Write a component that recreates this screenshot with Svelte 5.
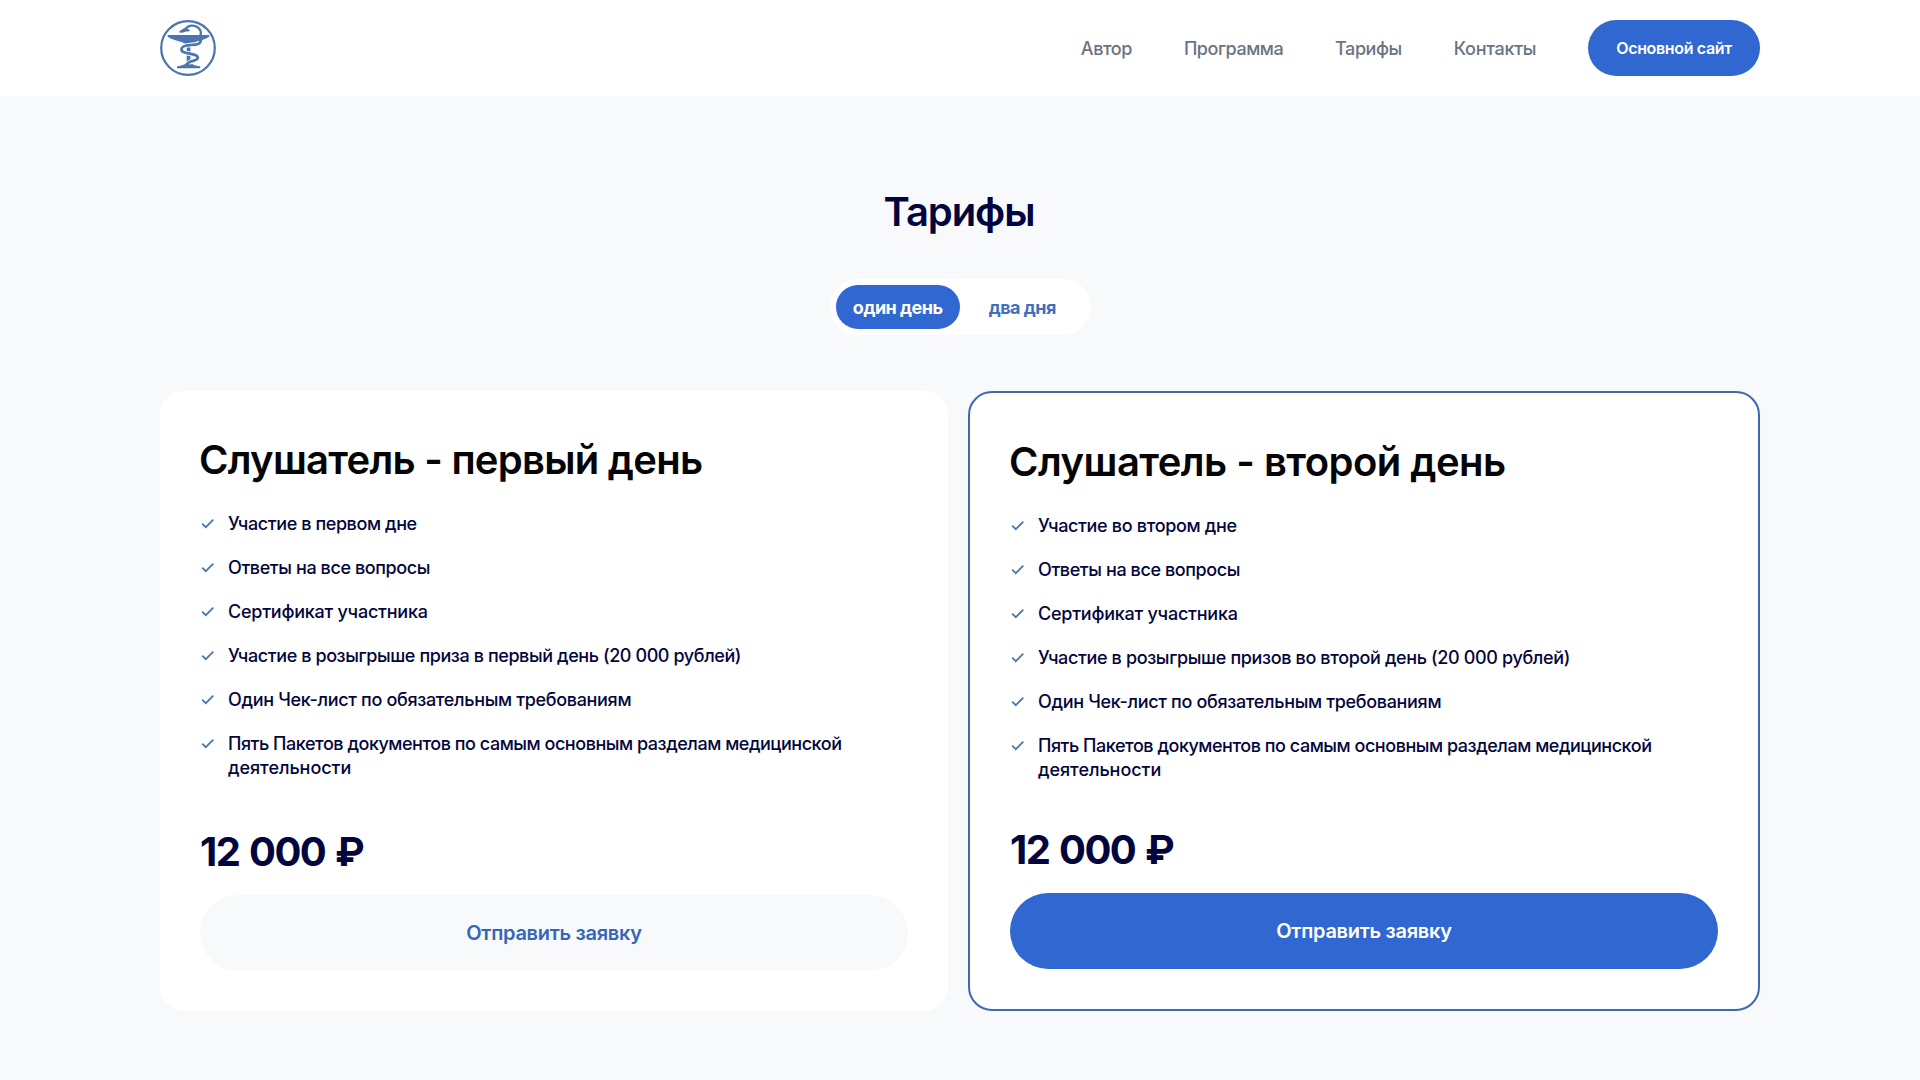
<script>
  const nav = [
    { label: 'Автор', cls: 'author' },
    { label: 'Программа', cls: 'program' },
    { label: 'Тарифы', cls: 'prices' },
    { label: 'Контакты', cls: 'contacts' }
  ];

  const plans = [
    {
      title: 'Слушатель - первый день',
      kind: 'first',
      price: '12 000 ₽',
      features: [
        'Участие в первом дне',
        'Ответы на все вопросы',
        'Сертификат участника',
        'Участие в розыгрыше приза в первый день (20 000 рублей)',
        'Один Чек-лист по обязательным требованиям'
      ]
    },
    {
      title: 'Слушатель - второй день',
      kind: 'second',
      price: '12 000 ₽',
      features: [
        'Участие во втором дне',
        'Ответы на все вопросы',
        'Сертификат участника',
        'Участие в розыгрыше призов во второй день (20 000 рублей)',
        'Один Чек-лист по обязательным требованиям'
      ]
    }
  ];

  let days = $state(1);
</script>

{#snippet check()}
  <svg class="check" viewBox="0 0 16 24" aria-hidden="true">
    <path d="M2.2 11.6 5.8 15.2 13.3 7.6" />
  </svg>
{/snippet}

<header>
  <div class="container bar">
    <a class="logo" href="#top" aria-label="Главная">
      <svg viewBox="0 0 56 56">
        <circle cx="28" cy="28" r="26.8" fill="none" stroke="#4b74b0" stroke-width="2.2" />
        <g fill="#4b74b0">
          <path d="M7.6 14.9h41.800v1.700c-3 2.700-8.500 3.800-12.900 5.200-3 .9-5.200 1.700-6 3.200h-3.900c-.8-1.500-3-2.300-6-3.200C16.200 20.400 10.600 19.300 7.600 16.600z" />
          <path d="M26.7 23h3.700v18.500c.1 2.500 3.200 3.700 9.8 4.800v2H17v-2c6.600-1.100 9.600-2.300 9.700-4.800z" />
          <path d="M18.8 12.300c1.700-2.500 4.800-4.500 7.500-4.100 1.900.3 2.800 1.500 4.100 2.400-1.900 1.300-3.900.6-5.700 1.300-1.400.6-3.400 1.200-5.900.4z" />
        </g>
        <g fill="none" stroke="#4b74b0" stroke-linecap="round">
          <path d="M25.5 8.8C28 5.300 33.500 4.600 37.200 7c3.600 2.500 4.400 5.400 3.200 8.400" stroke-width="2.3" />
          <path d="M40.200 22c-2 2.800-5.600 2.700-9.400 3-5.100.3-9.400 1.400-9.400 4.500 0 5.400 16.400 3 16.400 8.300 0 3.400-7.800 2.500-9.600 5.800" stroke="#fff" stroke-width="4.600" stroke-linecap="butt" />
          <path d="M40.800 19.300c.4 5.200-5.200 5.400-10 5.700-5.100.3-9.400 1.400-9.400 4.500 0 5.400 16.400 3 16.400 8.300 0 3.400-7.800 2.500-9.600 5.300" stroke-width="2.700" />
        </g>
      </svg>
    </a>
    <nav>
      {#each nav as item}
        <a class={item.cls} href="#{item.cls}">{item.label}</a>
      {/each}
      <a class="site" href="#site">Основной сайт</a>
    </nav>
  </div>
</header>

<main class="container">
  <h1>Тарифы</h1>

  <div class="tabs">
    <button class:active={days === 1} onclick={() => (days = 1)}>один день</button>
    <button class:active={days === 2} onclick={() => (days = 2)}>два дня</button>
  </div>

  <section class="plans">
    {#each plans as plan}
      <article class={plan.kind}>
        <h2>{plan.title}</h2>
        <ul>
          {#each plan.features as feature}
            <li>{@render check()}<span>{feature}</span></li>
          {/each}
          <li>
            {@render check()}
            <span>Пять Пакетов документов по самым основным разделам медицинской <span class="tail">деятельности</span></span>
          </li>
        </ul>
        <p class="price">{plan.price}</p>
        <button class="apply">Отправить заявку</button>
      </article>
    {/each}
  </section>
</main>

<style>
  :global(body) {
    margin: 0;
    background: #f8f9fb;
    font-family: Inter, 'Liberation Sans', sans-serif;
    color: #03063d;
  }

  a {
    color: inherit;
    text-decoration: none;
  }

  button {
    border: 0;
    padding: 0;
    font-family: inherit;
    cursor: pointer;
  }

  .container {
    width: 1600px;
    margin: 0 auto;
  }

  header {
    background: #fff;
  }

  .bar {
    display: flex;
    align-items: center;
    justify-content: space-between;
    height: 96px;
  }

  .logo,
  .logo svg {
    display: block;
    width: 56px;
    height: 56px;
  }

  nav {
    display: flex;
    align-items: center;
    gap: 51.9px;
    font-size: 18px;
    font-weight: 500;
    color: #6a7382;
  }

  .author { letter-spacing: -0.42px; }
  .program { letter-spacing: -0.48px; }
  .prices { letter-spacing: -0.42px; }
  .contacts { letter-spacing: -0.29px; }

  .site {
    display: flex;
    align-items: center;
    justify-content: center;
    width: 172px;
    height: 56px;
    border-radius: 28px;
    background: #3067d0;
    color: #fff;
    font-size: 16px;
    font-weight: 600;
    letter-spacing: -0.346px;
  }

  main {
    display: flex;
    flex-direction: column;
    align-items: center;
    padding: 92px 0 69px;
  }

  h1 {
    margin: 0 0 43px;
    padding-right: 2px;
    font-size: 40px;
    line-height: 48px;
    font-weight: 600;
    letter-spacing: -1.1px;
    color: #02043d;
  }

  .tabs {
    display: flex;
    padding: 6px;
    border-radius: 28px;
    background: #fff;
    margin-bottom: 56px;
  }

  .tabs button {
    width: 124.5px;
    height: 44px;
    border-radius: 22px;
    background: transparent;
    color: #3f6fbd;
    font-size: 18px;
    font-weight: 700;
    letter-spacing: -0.5px;
  }

  .tabs .active {
    background: #3067d0;
    color: #fff;
  }

  .plans {
    display: flex;
    gap: 20px;
    width: 100%;
  }

  article {
    display: flex;
    flex-direction: column;
    flex: 1 1 0;
    padding: 40px;
    border-radius: 24px;
    background: #fff;
  }

  .second {
    border: 2px solid #3c69b1;
  }

  .first {
    min-height: 540px;
  }

  h2 {
    margin: 0 0 23px -1px;
    padding-top: 1px;
    font-size: 40px;
    line-height: 56px;
    font-weight: 600;
    letter-spacing: -0.737px;
    color: #050505;
  }

  .second h2 {
    letter-spacing: -0.53px;
  }

  ul {
    display: flex;
    flex-direction: column;
    gap: 20px;
    margin: 0;
    padding: 1px 0 0;
    list-style: none;
  }

  li {
    display: flex;
    gap: 12px;
    font-size: 18px;
    line-height: 24px;
    font-weight: 500;
    letter-spacing: -0.41px;
  }

  li:nth-child(3) { letter-spacing: -0.23px; }
  li:nth-child(5) { letter-spacing: -0.33px; }
  li:nth-child(6) { letter-spacing: -0.465px; }
  .second li:nth-child(1) { letter-spacing: -0.33px; }
  .second li:nth-child(4) { letter-spacing: -0.36px; }

  li .tail {
    letter-spacing: -0.04px;
  }

  .check {
    flex: none;
    width: 16px;
    height: 24px;
    fill: none;
    stroke: #4674b4;
    stroke-width: 1.7;
  }

  .price {
    margin: auto 0 19px;
    font-size: 40px;
    line-height: 48px;
    font-weight: 700;
    letter-spacing: -1.6px;
    word-spacing: 2px;
  }

  .apply {
    height: 76px;
    border-radius: 38px;
    background: #f8f9fb;
    color: #3567b8;
    font-size: 20px;
    font-weight: 600;
    letter-spacing: -0.279px;
  }

  .second .apply {
    background: #3067d0;
    color: #fff;
  }
</style>
